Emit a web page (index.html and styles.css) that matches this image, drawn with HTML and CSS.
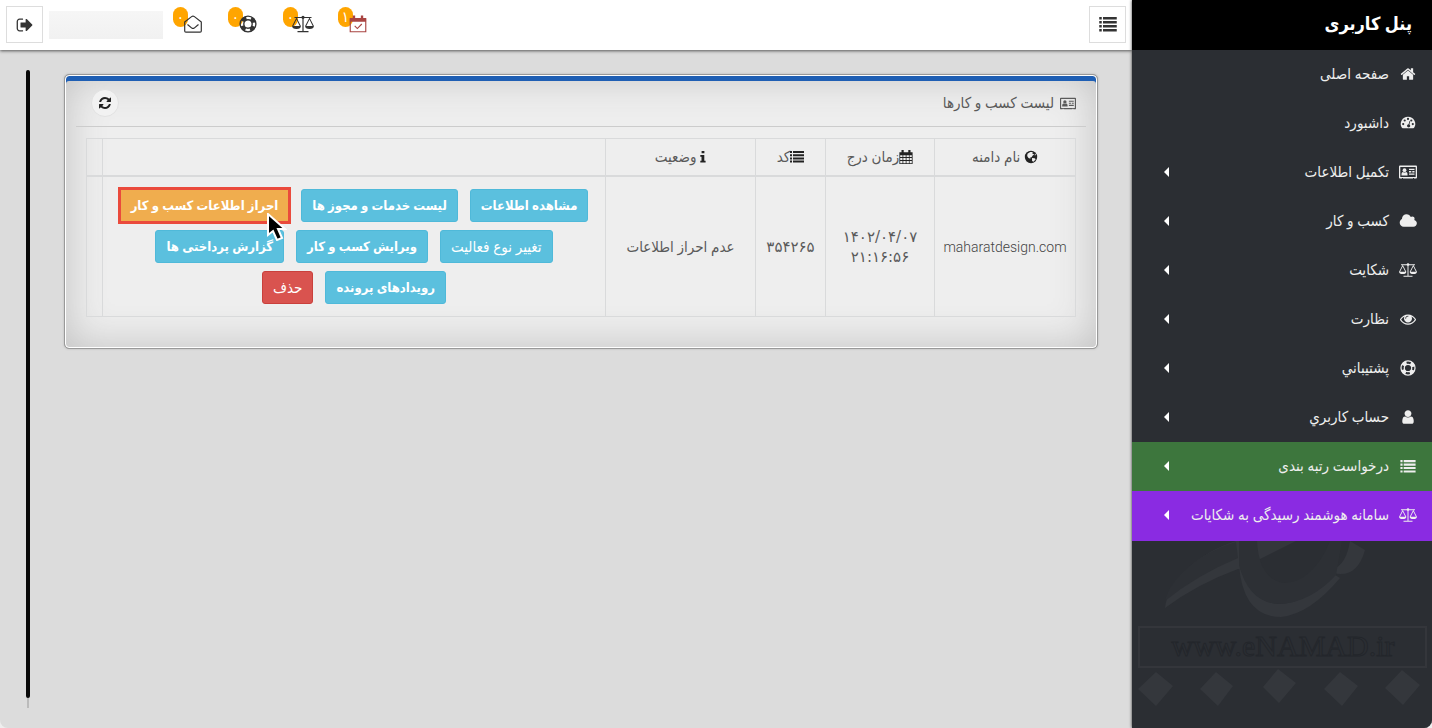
FILE: index.html
```html
<!DOCTYPE html>
<html lang="fa" dir="rtl">
<head>
<meta charset="utf-8">
<title>پنل کاربری</title>
<link rel="stylesheet" href="styles.css">
</head>
<body>
<svg class="sprite" aria-hidden="true">
  <symbol id="home" viewBox="0 0 1792 1792"><path d="M1472 992v480q0 26-19 45t-45 19h-384v-384h-256v384h-384q-26 0-45-19t-19-45v-480q0-1 .5-3t.5-3l575-474 575 474q1 2 1 6zm223-69l-62 74q-8 9-21 11h-3q-13 0-21-7l-692-577-692 577q-12 8-24 7-13-2-21-11l-62-74q-8-10-7-23.5t11-21.5l719-599q32-26 76-26t76 26l244 204v-195q0-14 9-23t23-9h192q14 0 23 9t9 23v408l219 182q10 8 11 21.5t-7 23.5z"/></symbol>
  <symbol id="gauge" viewBox="0 0 16 16"><path fill-rule="evenodd" d="M8 1.7a7.2 7.2 0 0 0-6.1 11.1c.2.3.5.5.8.5h10.6c.3 0 .6-.2.8-.5A7.2 7.2 0 0 0 8 1.7zM3.2 8a1.1 1.1 0 1 1 0 2.2 1.1 1.1 0 0 1 0-2.2zm1.5-3.6a1.1 1.1 0 1 1 0 2.2 1.1 1.1 0 0 1 0-2.2zM8 2.8A1.1 1.1 0 1 1 8 5a1.1 1.1 0 0 1 0-2.2zm3.3 1.6a1.1 1.1 0 1 1 0 2.2 1.1 1.1 0 0 1 0-2.2zM12.800 8a1.1 1.1 0 1 1 0 2.200 1.1 1.1 0 0 1 0-2.200zM9.500 6l.7.2-.8 3.200a1.600 1.600 0 1 1-.8-.2z"/></symbol>
  <symbol id="idcard" viewBox="0 0 18 14"><path fill-rule="evenodd" d="M1 .5h16a1 1 0 0 1 1 1v11a1 1 0 0 1-1 1h-2v-.6h-1v.6H4v-.6H3v.6H1a1 1 0 0 1-1-1v-11a1 1 0 0 1 1-1zM1.300 1.900v10.200h15.400V1.900z"/><circle cx="5.500" cy="5.200" r="1.900"/><path d="M2.500 10.500V8.800q.2-1.700 1.500-1.900 1.500 1 3 0 1.300.2 1.500 1.900v1.700zM10 3.800h5.500v1.300H10zm0 2.300h2.300v1.300H10zm3.300 0h2.200v1.300h-2.200zM10 8.400h5.500v1.300H10z"/></symbol>
  <symbol id="cloud" viewBox="0 0 1984 1792"><path d="M1984 1152q0 159-112.500 271.500t-271.500 112.500h-1088q-185 0-316.500-131.500t-131.500-316.500q0-132 71-241.500t187-163.500q-2-28-2-43 0-212 150-362t362-150q158 0 286.500 88t187.500 230q70-62 166-62 106 0 181 75t75 181q0 75-41 138 129 30 213 134.500t84 239.500z"/></symbol>
  <symbol id="scales" viewBox="0 0 22 18"><path d="M2.500 1.900h17v1.200h-17zM10.400 2.500h1.200v13.800h-1.200zM5.500 16h11v1.200h-11z"/><circle cx="11" cy="2.300" r="1.600"/><path fill-rule="evenodd" d="M4.500 2.500 8.900 11q0 3-4.400 3T.1 11zM4.500 4.600 1.300 11h6.400zM17.500 2.500l4.400 8.500q0 3-4.400 3t-4.400-3zm0 2.100L14.300 11h6.400z"/></symbol>
  <symbol id="eye" viewBox="0 0 1792 1792"><path d="M1664 960q-152-236-381-353 61 104 61 225 0 185-131.500 316.500t-316.500 131.500-316.500-131.500-131.500-316.500q0-121 61-225-229 117-381 353 133 205 333.500 326.500t434.500 121.500 434.500-121.500 333.500-326.500zm-720-384q0-20-14-34t-34-14q-125 0-214.500 89.500t-89.500 214.500q0 20 14 34t34 14 34-14 14-34q0-86 61-147t147-61q20 0 34-14t14-34zm848 384q0 34-20 69-140 230-376.500 368.500t-499.500 138.500-499.500-139-376.500-368q-20-35-20-69t20-69q140-229 376.500-368t499.500-139 499.500 139 376.500 368q20 35 20 69z"/></symbol>
  <symbol id="ring" viewBox="0 0 18 18"><g fill="none" stroke="currentColor"><circle cx="9" cy="9" r="7.900" stroke-width="1.400"/><circle cx="9" cy="9" r="4.200" stroke-width="1.400"/><circle cx="9" cy="9" r="6" stroke-width="4" stroke-dasharray="4.712 4.712" stroke-dashoffset="-2.356"/></g></symbol>
  <symbol id="user" viewBox="0 0 1792 1792"><path d="M1536 1399q0 109-62.500 187t-150.500 78h-854q-88 0-150.500-78t-62.500-187q0-85 8.500-160.500t31.500-152 58.500-131 94-89 134.500-34.500q131 128 313 128t313-128q76 0 134.500 34.500t94 89 58.500 131 31.500 152 8.500 160.500zm-256-887q0 159-112.500 271.500t-271.500 112.500-271.500-112.500-112.500-271.500 112.500-271.500 271.500-112.500 271.500 112.500 112.500 271.500z"/></symbol>
  <symbol id="list" viewBox="0 0 14 12"><path d="M0 0h2v2H0zm3 0h11v2H3zM0 3.200h2v2H0zm3 0h11v2H3zM0 6.400h2v2H0zm3 0h11v2H3zM0 9.600h2v2H0zm3 0h11v2H3z"/></symbol>
  <symbol id="signout" viewBox="0 0 1792 1792"><path d="M704 1440q0 4 1 20t.5 26.500-3 23.500-10 19.500-20.500 6.500h-320q-119 0-203.500-84.500t-84.500-203.500v-704q0-119 84.500-203.500t203.500-84.500h320q13 0 22.500 9.500t9.500 22.500q0 4 1 20t.5 26.500-3 23.500-10 19.500-20.500 6.500h-320q-66 0-113 47t-47 113v704q0 66 47 113t113 47h312l11.500 1 11.500 3 8 5.500 7 9 2 13.500zm928-544q0 26-19 45l-544 544q-19 19-45 19t-45-19-19-45v-288h-448q-26 0-45-19t-19-45v-384q0-26 19-45t45-19h448v-288q0-26 19-45t45-19 45 19l544 544q19 19 19 45z"/></symbol>
  <symbol id="refresh" viewBox="0 0 1792 1792"><path d="M1639 1056q0 5-1 7-64 268-268 434.500t-478 166.500q-146 0-282.500-55t-243.500-157l-129 129q-19 19-45 19t-45-19-19-45v-448q0-26 19-45t45-19h448q26 0 45 19t19 45-19 45l-137 137q71 66 161 102t187 36q134 0 250-65t186-179q11-17 53-117 8-23 30-23h192q13 0 22.500 9.500t9.500 22.500zm25-800v448q0 26-19 45t-45 19h-448q-26 0-45-19t-19-45 19-45l138-138q-148-137-349-137-134 0-250 65t-186 179q-11 17-53 117-8 23-30 23h-199q-13 0-22.500-9.500t-9.500-22.500v-7q65-268 270-434.500t480-166.500q146 0 284 55.500t245 156.500l130-129q19-19 45-19t45 19 19 45z"/></symbol>
  <symbol id="mail" viewBox="0 0 18 18"><path fill="none" stroke="currentColor" stroke-width="1.200" stroke-linejoin="round" d="M.7 16V7L7.600 1.600q1.400-1.100 2.800 0L17.300 7v9q0 1.200-1.200 1.200H1.900Q.7 17.200.7 16zM3.500 9.500l4.300 3.600q1.200.8 2.400 0l4.300-3.600"/></symbol>
  <symbol id="calcheck" viewBox="0 0 18 19"><path fill="none" stroke="currentColor" stroke-width="1.200" d="M.8 4h16.400v13.700H.8zM5.500 11.500l2.800 2.800 4.700-4.800"/><path d="M.5 3.200h17V7H.5zM3.500.5H6v4H3.500zm8.500 0h2.500v4H12z"/></symbol>
  <symbol id="calendar" viewBox="0 0 14 14"><path fill-rule="evenodd" d="M.4 2.200h13.200V14H.4zM1.200 5.200v1.900h2.300V5.200zm3.100 0v1.900h2.400V5.200zm3.200 0v1.900h2.400V5.200zm3.100 0v1.900h2.200V5.200zM1.200 7.900v2.200h2.300V7.900zm3.100 0v2.200h2.400V7.900zm3.200 0v2.200h2.400V7.900zm3.100 0v2.200h2.200V7.900zM1.200 11v2.200h2.300V11zm3.100 0v2.200h2.400V11zm3.200 0v2.200h2.400V11zm3.100 0v2.200h2.200V11z"/><path d="M2.500 0h2.200v3.700H2.500zm6.800 0h2.200v3.700H9.300z"/></symbol>
  <symbol id="globe" viewBox="0 0 14 14"><circle cx="7" cy="7" r="6.200"/><path class="land" d="M6.200 1.900 8.700 2l-.4 1.600 1.900.8-1.500 1.200-1.100 1.700-1.400.2.300 1.300-2-.8-1.300-2 .3-2.200zM8 8l2.700.2 1 1.100-2.200 2.500-1.400-.9zM11 3.500l1 1.600-1.300.3z"/></symbol>
  <symbol id="info" viewBox="0 0 6 14"><path d="M1.600 1h2.800v2.300H1.600zM.3 5h4v5.800h1.300v1.800H.3v-1.800h1.200V6.700H.3z"/></symbol>
</svg>
<div class="app">
  <aside class="sidebar">
    <h1 class="brand">پنل کاربری</h1>
    <nav>
      <ul class="menu">
        <li><a href="#"><svg class="ico"><use href="#home"/></svg><span>صفحه اصلی</span></a></li>
        <li><a href="#"><svg class="ico"><use href="#gauge"/></svg><span>داشبورد</span></a></li>
        <li><a href="#"><svg class="ico"><use href="#idcard"/></svg><span>تکمیل اطلاعات</span><i class="caret"></i></a></li>
        <li><a href="#"><svg class="ico"><use href="#cloud"/></svg><span>کسب و کار</span><i class="caret"></i></a></li>
        <li><a href="#"><svg class="ico"><use href="#scales"/></svg><span>شکایت</span><i class="caret"></i></a></li>
        <li><a href="#"><svg class="ico"><use href="#eye"/></svg><span>نظارت</span><i class="caret"></i></a></li>
        <li><a href="#"><svg class="ico"><use href="#ring"/></svg><span>پشتیباني</span><i class="caret"></i></a></li>
        <li><a href="#"><svg class="ico"><use href="#user"/></svg><span>حساب کاربري</span><i class="caret"></i></a></li>
        <li class="green"><a href="#"><svg class="ico small"><use href="#list"/></svg><span>درخواست رتبه بندی</span><i class="caret"></i></a></li>
        <li class="purple"><a href="#"><svg class="ico"><use href="#scales"/></svg><span>سامانه هوشمند رسیدگی به شکایات</span><i class="caret"></i></a></li>
      </ul>
    </nav>
    <svg class="watermark" viewBox="0 0 300 187" aria-hidden="true">
      <path fill="#34373c" d="M33 67C36 40 66 12 104 0h60L128 18 121 28 106 28Q65 43 33 67zM201 28Q214 24 218 0L233 9Q225 38 201 32z"/>
      <path fill="#2d3035" d="M33 60C38 38 66 12 104 1L106 17Q65 34 33 60z"/>
      <path fill="#34373c" d="M107 24Q111 76 149 76 178 73 208 37L200 32Q177 62 147 63 120 62 107 24z"/>
      <path fill="#2d3035" d="M107 0h18Q127 38 152 42 181 41 198 0h12L204 34Q178 62 147 63 117 62 107 24z"/>
      <rect x="7" y="86" width="287" height="40" fill="none" stroke="#34363b" stroke-width="2"/>
      <text x="151" y="115" text-anchor="middle" direction="ltr" class="mark">www.eNAMAD.ir</text>
      <g fill="#34373c"><path d="M24 131l17 14-17 20-18-17zM84 131l17 14-15 20-18-17zM146 128l18 14-17 20-16-16zM208 131l18 14-16 20-18-17zM270 129l18 15-17 20-18-17z"/></g>
    </svg>
  </aside>
  <header class="topbar">
    <button class="square" type="button" aria-label="منو"><svg class="menu-ico"><use href="#list"/></svg></button>
    <div class="tools">
      <a class="tool alert" href="#"><span class="badge">۱</span><svg><use href="#calcheck"/></svg></a>
      <a class="tool" href="#"><span class="badge">۰</span><svg class="wide"><use href="#scales"/></svg></a>
      <a class="tool" href="#"><span class="badge">۰</span><svg><use href="#ring"/></svg></a>
      <a class="tool" href="#"><span class="badge">۰</span><svg><use href="#mail"/></svg></a>
      <span class="account"></span>
      <button class="square" type="button" aria-label="خروج"><svg><use href="#signout"/></svg></button>
    </div>
  </header>
  <main class="content">
    <section class="panel">
      <header class="panel-head">
        <h2><svg><use href="#idcard"/></svg>لیست کسب و کارها</h2>
        <button class="round" type="button" aria-label="بارگذاری مجدد"><svg><use href="#refresh"/></svg></button>
      </header>
      <table class="grid">
        <colgroup><col class="c-domain"><col class="c-time"><col class="c-code"><col class="c-state"><col><col class="c-end"></colgroup>
        <thead>
          <tr>
            <th><svg><use href="#globe"/></svg> نام دامنه</th>
            <th><svg><use href="#calendar"/></svg>زمان درج</th>
            <th><svg><use href="#list"/></svg>کد</th>
            <th><svg class="thin"><use href="#info"/></svg> وضعیت</th>
            <th></th><th></th>
          </tr>
        </thead>
        <tbody>
          <tr>
            <td class="domain" dir="ltr">maharatdesign.com</td>
            <td class="num">۱۴۰۲/۰۴/۰۷<br>۲۱:۱۶:۵۶</td>
            <td class="num">۳۵۴۲۶۵</td>
            <td>عدم احراز اطلاعات</td>
            <td>
              <div class="actions">
                <button type="button" class="btn">مشاهده اطلاعات</button>
                <button type="button" class="btn">لیست خدمات و مجوز ها</button>
                <button type="button" class="btn warn">احراز اطلاعات کسب و کار<svg class="cursor" viewBox="0 0 20 28" aria-hidden="true"><path d="M1 1v21l5-4 4 9 5-2-4-9h7z"/></svg></button>
                <button type="button" class="btn light">تغییر نوع فعالیت</button>
                <button type="button" class="btn">ویرایش کسب و کار</button>
                <button type="button" class="btn">گزارش پرداختی ها</button>
                <button type="button" class="btn">رویدادهای پرونده</button>
                <button type="button" class="btn light danger">حذف</button>
              </div>
            </td>
            <td></td>
          </tr>
        </tbody>
      </table>
    </section>
    <div class="track"><div class="thumb"></div></div>
  </main>
</div>
</body>
</html>
```
FILE: styles.css
```css
* { box-sizing: border-box; }
body {
  margin: 0;
  background: #eee;
  color: #5a5a5a;
  font: 15px/20px Roboto, "DejaVu Sans Condensed", "DejaVu Sans", sans-serif;
}
svg { fill: currentColor; flex: none; }
button { font: inherit; cursor: pointer; }
a { color: inherit; text-decoration: none; }
h1, h2, ul { margin: 0; padding: 0; }
.sprite { position: absolute; width: 0; height: 0; }

.app {
  display: grid;
  grid-template-columns: 300px 1fr;
  grid-template-rows: 50px 1fr;
  min-height: 100vh;
  background: #dcdcdc;
  border-radius: 0 0 8px 8px;
  overflow: hidden;
}

.sidebar {
  grid-row: 1 / 3;
  display: flex;
  flex-direction: column;
  background: #2b2e33;
  color: #eee;
  box-shadow: 0 0 3px #333;
  z-index: 2;
}
.brand {
  height: 50px;
  padding: 0 20px;
  background: #000;
  color: #fff;
  font-size: 18px;
  line-height: 48px;
}
.menu { list-style: none; }
.menu a {
  display: flex;
  align-items: center;
  gap: 10px;
  height: 49px;
  padding: 0 15px 1px 32px;
}
.ico { width: 18px; height: 16px; }
.ico.small { height: 13px; }
.caret {
  margin-right: auto;
  border: solid transparent;
  border-width: 5px 0;
  border-right: 5px solid #fff;
}
.green { background: #3d763d; }
.purple { padding-bottom: 1px; background: #8a2be2; }
.watermark { width: 100%; }
.mark { font: 30px "Liberation Serif", serif; fill: #2b2e33; stroke: #23262b; stroke-width: 1px; }

.topbar {
  display: flex;
  justify-content: space-between;
  padding: 6px;
  background: #fff;
  box-shadow: 0 1px 3px #555;
  color: #333;
  z-index: 1;
}
.square {
  display: flex;
  align-items: center;
  justify-content: center;
  width: 37px;
  height: 37px;
  padding: 0;
  border: 1px solid #ddd;
  background: #fff;
  color: #333;
}
.square svg { width: 18px; height: 18px; }
.square .menu-ico { height: 15px; }
.tools { display: flex; }
.tool {
  position: relative;
  display: flex;
  align-items: center;
  justify-content: center;
  width: 55px;
  height: 36px;
}
.tool svg { position: relative; width: 18px; height: 18px; }
.tool .wide { width: 22px; }
.alert svg { color: #a94442; }
.badge {
  position: absolute;
  top: 1px;
  left: 8px;
  width: 15px;
  height: 20px;
  border-radius: 8px;
  background: #ffa500;
  color: #fff;
  font-size: 15px;
  line-height: 20px;
  text-align: center;
}
.account {
  width: 114px;
  height: 28px;
  margin: 5px 2px 0 6px;
  background: linear-gradient(#f6f6f6, #f1f1f1);
}

.content {
  display: flex;
  align-items: stretch;
  gap: 35px;
  padding: 20px 35px 20px 26px;
}
.track { width: 4px; background: linear-gradient(to right, transparent 1px, #bbb 1px, #bbb 3px, transparent 3px); }
.thumb { height: 98.4%; border-radius: 2px; background: #080808; }
.panel {
  flex: 1;
  align-self: flex-start;
  margin-top: 5px;
  padding: 5px 10px 30px;
  border: 1px solid #fff;
  border-radius: 4px;
  outline: 1px solid #999;
  background: #eee;
  box-shadow: inset 0 5px #1f5fb4, inset 0 0 40px #c0c0c0, 0 0 3px #888;
}
.panel-head {
  display: flex;
  align-items: center;
  justify-content: space-between;
  height: 46px;
  padding: 0 10px 1px 15px;
  border-bottom: 1px solid #ccc;
}
h2 {
  display: flex;
  align-items: center;
  gap: 6px;
  font-size: 15px;
  font-weight: normal;
}
h2 svg { width: 16px; height: 13px; }
.round {
  display: flex;
  align-items: center;
  justify-content: center;
  width: 28px;
  height: 28px;
  padding: 0;
  border: 1px solid #e2e2e2;
  border-radius: 50%;
  background: #f2f2f2;
  color: #222;
}
.round svg { width: 14px; height: 14px; }

.grid {
  width: calc(100% - 20px);
  margin: 11px 10px 0;
  table-layout: fixed;
  border-collapse: collapse;
  text-align: center;
}
.c-domain { width: 141px; }
.c-time { width: 109px; }
.c-code { width: 70px; }
.c-state { width: 150px; }
.c-end { width: 16px; }
.grid th, .grid td { border: 1px solid #d9dadb; padding: 8px 0; }
.grid th { height: 37px; border-bottom-width: 2px; font-weight: normal; }
.grid th svg { width: 14px; height: 14px; color: #222; vertical-align: -2px; }
.grid th .thin { width: 6px; }
.land { fill: #eee; }
.grid .domain { font-size: 14px; font-weight: 300; color: #444; }
.num { font-family: "DejaVu Sans", sans-serif; }

.actions {
  display: flex;
  flex-wrap: wrap;
  justify-content: center;
  gap: 8px 12px;
  padding: 4px 8px;
}
.btn {
  position: relative;
  height: 33px;
  padding: 0 10px;
  border: 1px solid #4fb9d9;
  border-radius: 3px;
  background: #5bc0de;
  color: #fff;
  font-size: 13px;
  font-weight: bold;
}
.light { font-size: 15px; font-weight: normal; }
.danger { border-color: #c9403c; background: #d9534f; }
.warn { border-color: #eea236; border-radius: 0; background: #f0ad4e; outline: 3px solid #ea4a3c; outline-offset: -1px; }
.cursor {
  position: absolute;
  left: 146px;
  top: 23px;
  width: 20px;
  height: 28px;
  fill: #000;
  stroke: #fff;
  stroke-width: 2px;
  z-index: 1;
}
```
